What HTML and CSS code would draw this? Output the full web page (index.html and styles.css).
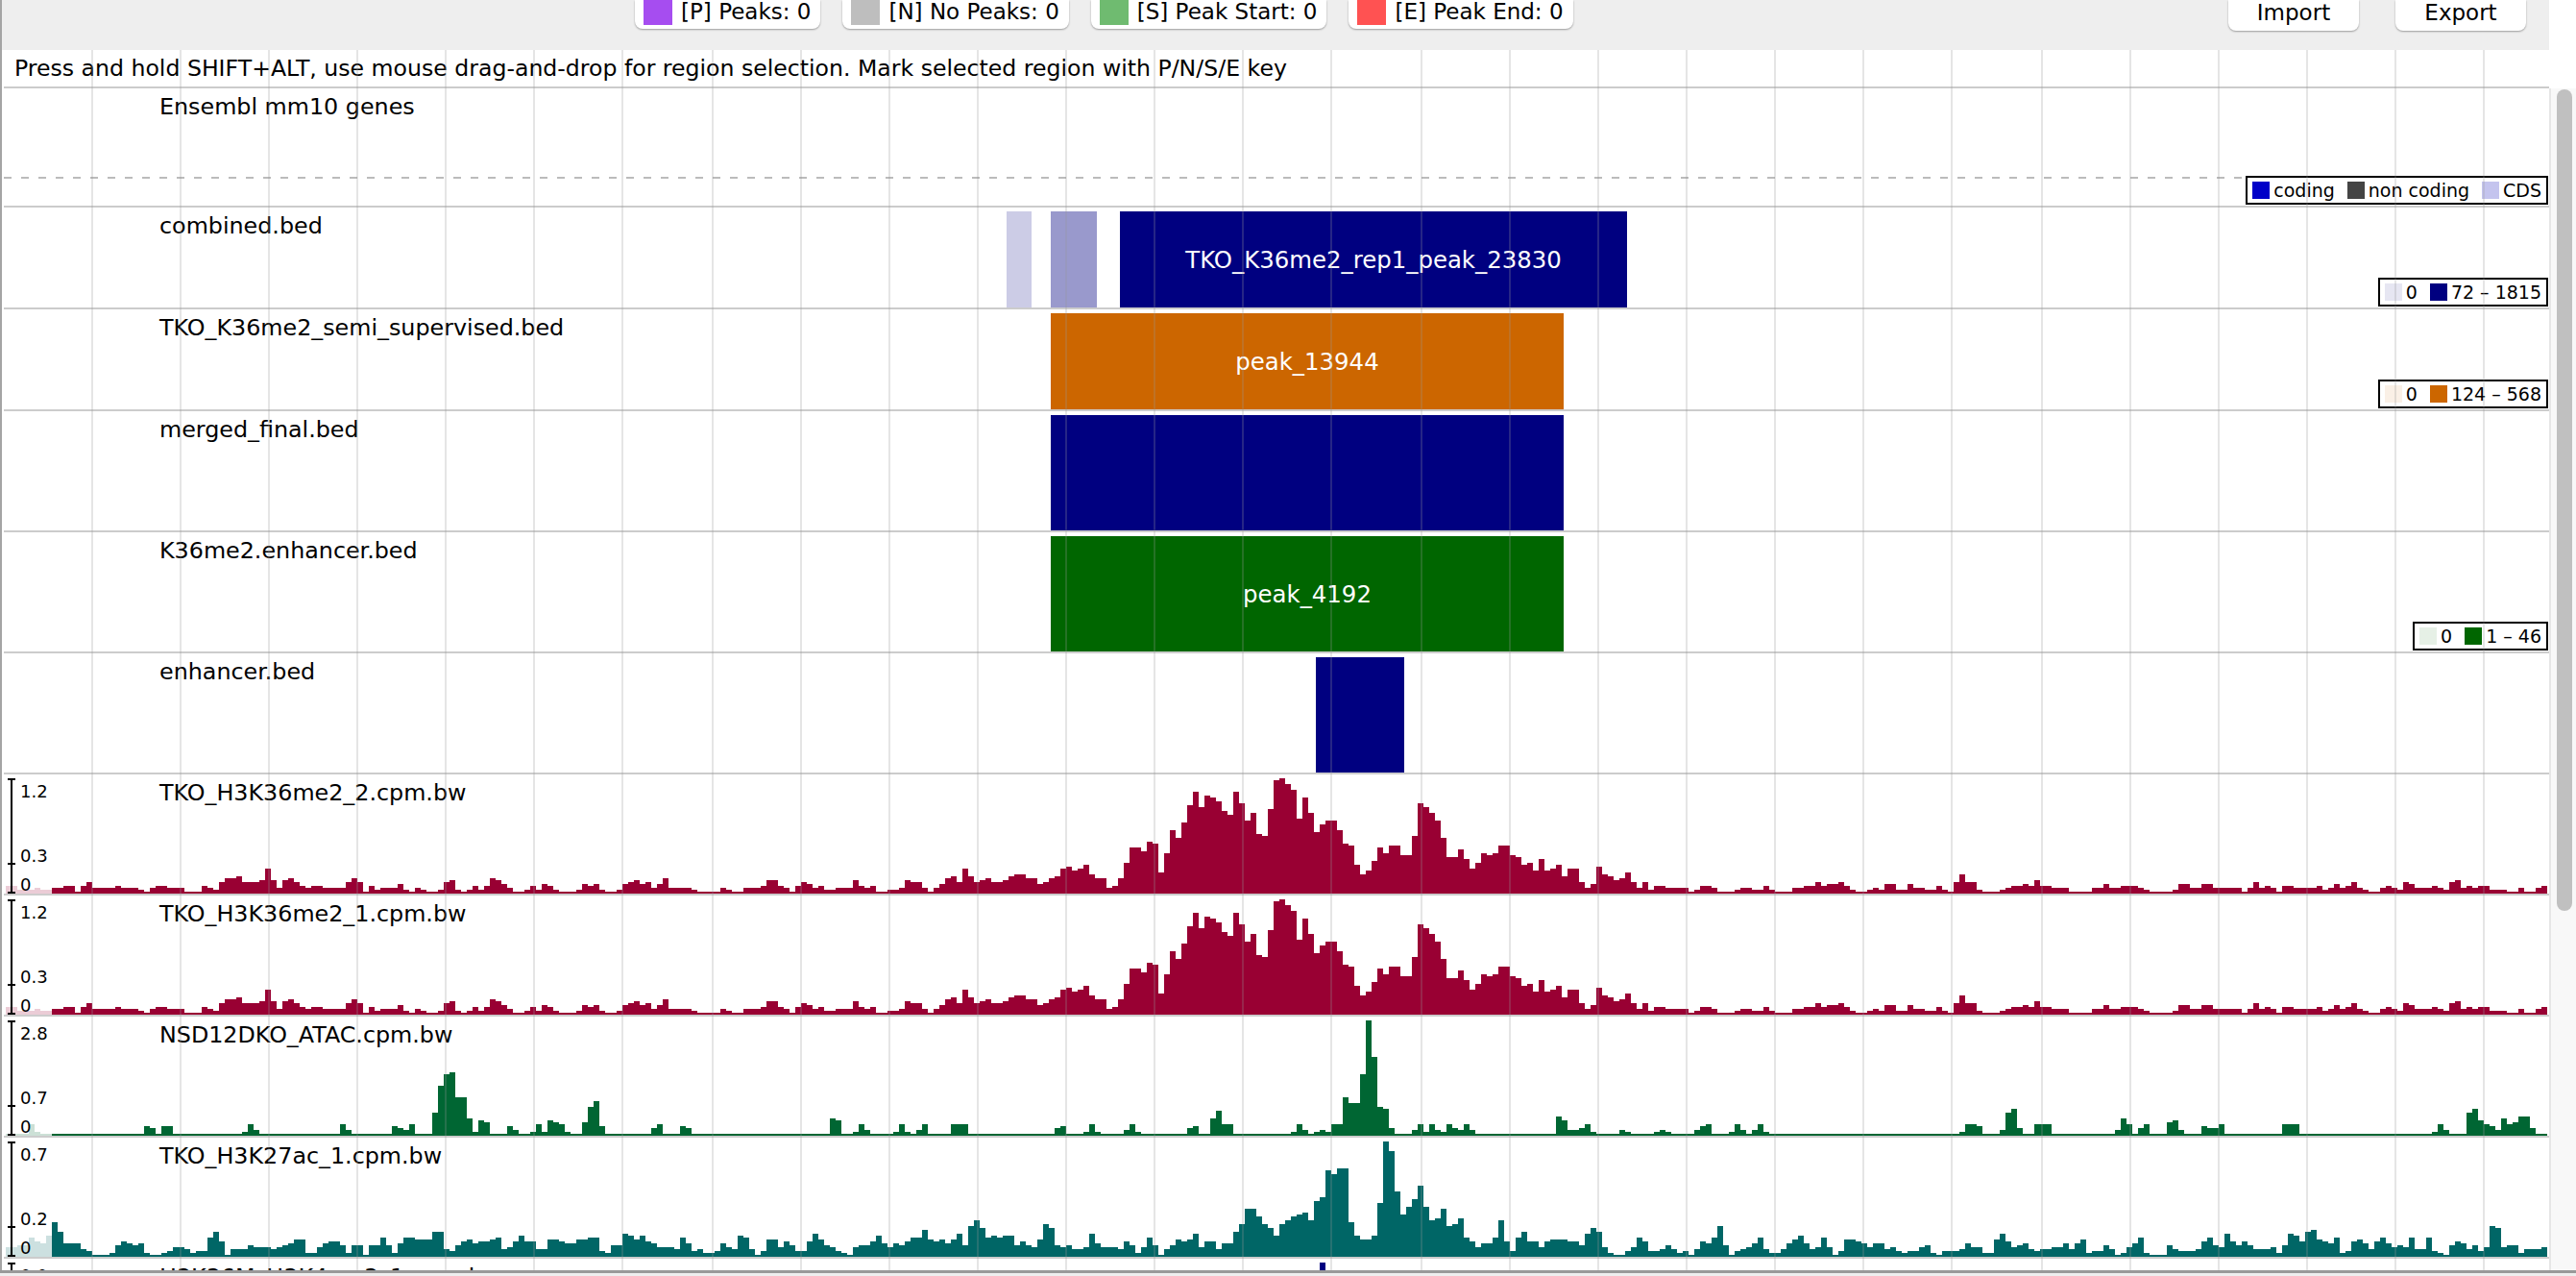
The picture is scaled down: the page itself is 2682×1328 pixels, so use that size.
FILE: index.html
```html
<!DOCTYPE html>
<html lang="en">
<head>
    <meta charset="UTF-8">
    <title>Peak Annotator</title>
    <link rel="stylesheet" href="styles.css">
</head>
<body>
    <div class="app">
        <div class="main">
            <!-- Marker counters and import/export -->
            <div class="toolbar">
                <div class="chip"><span class="swatch swatch-peak"></span>[P] Peaks: 0</div>
                <div class="chip"><span class="swatch swatch-nopeak"></span>[N] No Peaks: 0</div>
                <div class="chip"><span class="swatch swatch-start"></span>[S] Peak Start: 0</div>
                <div class="chip"><span class="swatch swatch-end"></span>[E] Peak End: 0</div>
                <button class="action action-import" type="button">Import</button>
                <button class="action" type="button">Export</button>
            </div>

            <div class="tracks">
                <div class="hint">Press and hold SHIFT+ALT, use mouse drag-and-drop for region selection. Mark selected region with P/N/S/E key</div>

                <div class="row row-gene">
                    <div class="track-name">Ensembl mm10 genes</div>
                    <div class="strand-line"></div>
                    <div class="legend">
                        <span class="key key-coding"></span><span class="key-text">coding</span>
                        <span class="key key-noncoding"></span><span class="key-text">non coding</span>
                        <span class="key key-cds"></span><span class="key-text">CDS</span>
                    </div>
                </div>

                <div class="row row-short">
                    <div class="track-name">combined.bed</div>
                    <div class="feature feature-navy-faint f-combined-a"></div>
                    <div class="feature feature-navy-soft f-combined-b"></div>
                    <div class="feature feature-navy f-combined-c">TKO_K36me2_rep1_peak_23830</div>
                    <div class="legend">
                        <span class="key key-navy-pale"></span><span class="key-text">0</span>
                        <span class="key key-navy"></span><span class="key-text">72 – 1815</span>
                    </div>
                </div>

                <div class="row row-short">
                    <div class="track-name">TKO_K36me2_semi_supervised.bed</div>
                    <div class="feature feature-orange f-peak">peak_13944</div>
                    <div class="legend">
                        <span class="key key-orange-pale"></span><span class="key-text">0</span>
                        <span class="key key-orange"></span><span class="key-text">124 – 568</span>
                    </div>
                </div>

                <div class="row">
                    <div class="track-name">merged_final.bed</div>
                    <div class="feature feature-navy f-peak"></div>
                </div>

                <div class="row">
                    <div class="track-name">K36me2.enhancer.bed</div>
                    <div class="feature feature-green f-peak">peak_4192</div>
                    <div class="legend">
                        <span class="key key-green-pale"></span><span class="key-text">0</span>
                        <span class="key key-green"></span><span class="key-text">1 – 46</span>
                    </div>
                </div>

                <div class="row">
                    <div class="track-name">enhancer.bed</div>
                    <div class="feature feature-navy f-enhancer"></div>
                </div>

                <div class="row">
                    <svg class="signal signal-crimson" data-track="k36me2"></svg>
                    <div class="track-name">TKO_H3K36me2_2.cpm.bw</div>
                    <div class="scale">
                        <svg class="axis"><path d="M4 5H12M8 5V123M4 93H12M4 123H12"/></svg>
                        <span class="scale-max">1.2</span><span class="scale-mid">0.3</span><span class="scale-min">0</span>
                    </div>
                </div>

                <div class="row">
                    <svg class="signal signal-crimson" data-track="k36me2"></svg>
                    <div class="track-name">TKO_H3K36me2_1.cpm.bw</div>
                    <div class="scale">
                        <svg class="axis"><path d="M4 5H12M8 5V123M4 93H12M4 123H12"/></svg>
                        <span class="scale-max">1.2</span><span class="scale-mid">0.3</span><span class="scale-min">0</span>
                    </div>
                </div>

                <div class="row">
                    <svg class="signal signal-green" data-track="atac"></svg>
                    <div class="track-name">NSD12DKO_ATAC.cpm.bw</div>
                    <div class="scale">
                        <svg class="axis"><path d="M4 5H12M8 5V123M4 93H12M4 123H12"/></svg>
                        <span class="scale-max">2.8</span><span class="scale-mid">0.7</span><span class="scale-min">0</span>
                    </div>
                </div>

                <div class="row">
                    <svg class="signal signal-teal" data-track="k27ac"></svg>
                    <div class="track-name">TKO_H3K27ac_1.cpm.bw</div>
                    <div class="scale">
                        <svg class="axis"><path d="M4 5H12M8 5V123M4 93H12M4 123H12"/></svg>
                        <span class="scale-max">0.7</span><span class="scale-mid">0.2</span><span class="scale-min">0</span>
                    </div>
                </div>

                <div class="row row-cut">
                    <div class="track-name">H3K36M_H3K4me3_1.cpm.bw</div>
                    <div class="feature feature-navy f-tick"></div>
                    <div class="scale">
                        <svg class="axis"><path d="M4 5H12M8 5V123"/></svg>
                        <span class="scale-max">0.0</span>
                    </div>
                </div>
            </div>

            <!-- Vertical ruler lines, drawn over everything in the tracks -->
            <svg class="ruler"><path d="M96 0V1270M188 0V1270M280 0V1270M372 0V1270M464 0V1270M556 0V1270M648 0V1270M742 0V1270M834 0V1270M926 0V1270M1018 0V1270M1110 0V1270M1202 0V1270M1294 0V1270M1386 0V1270M1480 0V1270M1572 0V1270M1664 0V1270M1756 0V1270M1848 0V1270M1940 0V1270M2032 0V1270M2126 0V1270M2218 0V1270M2310 0V1270M2402 0V1270M2494 0V1270M2586 0V1270"/></svg>
        </div>

        <div class="scrollbar"><div class="thumb"></div></div>
    </div>
    <div class="statusbar"></div>

    <script src="tracks.js"></script>
</body>
</html>
```

FILE: styles.css
```css
html, body {
    margin: 0;
    height: 100%;
    overflow: hidden;
    background-color: #fff;
}
body {
    font-family: "DejaVu Sans", sans-serif;
    font-size: 20px;
    color: #000;
}
.app {
    display: flex;
    height: 1322px;
}
.main {
    position: relative;
    width: 2652px;
    border-left: 2px solid #a4a4a4;
}

/* toolbar */
.toolbar {
    display: flex;
    align-items: flex-start;
    height: 52px;
    padding-left: 659px;
    padding-right: 24px;
    gap: 23px;
    font-size: 23px;
    background-color: #eee;
    box-sizing: border-box;
}
.chip {
    display: flex;
    height: 30px;
    padding: 0 10px 0 9px;
    gap: 9px;
    line-height: 24px;
    background-color: #fff;
    border-radius: 0 0 8px 8px;
    box-shadow: 0 1px 2px rgba(0, 0, 0, 0.35);
    white-space: nowrap;
}
.swatch {
    width: 30px;
    height: 26px;
}
.swatch-peak { background-color: #a64df0; }
.swatch-nopeak { background-color: #bebebe; }
.swatch-start { background-color: #6fbb70; }
.swatch-end { background-color: #ff5252; }
.action {
    width: 136px;
    height: 32px;
    padding: 0 0 6px;
    font: inherit;
    color: #000;
    background-color: #fff;
    border: none;
    border-radius: 0 0 8px 8px;
    box-shadow: 0 1px 2px rgba(0, 0, 0, 0.35);
}
.action-import {
    margin-left: auto;
    margin-right: 15px;
}

/* tracks */
.tracks {
    margin-left: 2px;
    background-color: #fff;
}
.hint {
    height: 38px;
    padding-left: 11px;
    font-size: 23.6px;
    line-height: 38px;
    border-bottom: 2px solid #ccc;
    white-space: nowrap;
}
.row {
    position: relative;
    height: 124px;
    border-bottom: 2px solid #ccc;
    overflow: hidden;
}
.row-gene { height: 122px; }
.row-short { height: 104px; }
.row-cut {
    height: 12px;
    border-bottom: none;
}
.track-name {
    position: relative;
    padding: 6px 0 0 162px;
    font-size: 23.8px;
    line-height: 26px;
}
.strand-line {
    position: absolute;
    top: 92px;
    left: 0;
    right: 10px;
    height: 2px;
    background: repeating-linear-gradient(90deg, #bbb 0 8px, transparent 8px 18px);
}

/* bed features */
.feature {
    position: absolute;
    top: 4px;
    bottom: 0;
    display: flex;
    align-items: center;
    justify-content: center;
    font-size: 24.4px;
    color: #fff;
    white-space: nowrap;
}
.feature-navy { background-color: #000080; }
.feature-navy-soft { background-color: #9999cc; }
.feature-navy-faint { background-color: #ccccE6; }
.feature-orange { background-color: #cc6600; }
.feature-green { background-color: #006600; }
.f-combined-a { left: 1044px; width: 26px; }
.f-combined-b { left: 1090px; width: 48px; }
.f-combined-c { left: 1162px; width: 528px; }
.f-peak { left: 1090px; width: 534px; }
.f-enhancer { left: 1366px; width: 92px; }
.f-tick { left: 1370px; width: 6px; }

/* legends */
.legend {
    position: absolute;
    right: 1px;
    bottom: 1px;
    display: flex;
    align-items: center;
    height: 26px;
    padding: 0 5px;
    font-size: 19px;
    background-color: #fff;
    border: 2px solid #000;
}
.key {
    width: 18px;
    height: 18px;
    margin-right: 4px;
}
.key-text {
    margin-right: 13px;
    white-space: nowrap;
}
.key-text:last-child { margin-right: 0; }
.key-coding { background-color: #0000c8; }
.key-noncoding { background-color: #444; }
.key-cds { background-color: #c4c4ee; }
.key-navy { background-color: #000080; }
.key-navy-pale { background-color: #e6e6f2; }
.key-orange { background-color: #cc6600; }
.key-orange-pale { background-color: #faf0e6; }
.key-green { background-color: #006600; }
.key-green-pale { background-color: #e6f0e6; }

/* bigwig tracks */
.signal {
    position: absolute;
    top: 0;
    left: 0;
    width: 2650px;
    height: 124px;
    shape-rendering: crispEdges;
}
.signal-crimson { fill: #990033; }
.signal-green { fill: #006633; }
.signal-teal { fill: #006666; }
.scale {
    position: absolute;
    top: 0;
    left: 0;
    width: 50px;
    height: 124px;
    font-size: 18px;
    background-color: rgba(255, 255, 255, 0.8);
}
.axis {
    position: absolute;
    top: 0;
    left: 0;
    width: 20px;
    height: 124px;
    fill: none;
    stroke: #000;
    stroke-width: 2;
    shape-rendering: crispEdges;
}
.scale-max, .scale-mid, .scale-min {
    position: absolute;
    left: 17px;
    line-height: 20px;
}
.scale-max { top: 8px; }
.scale-mid { top: 75px; }
.scale-min { top: 105px; }

/* ruler */
.ruler {
    position: absolute;
    top: 52px;
    left: -2px;
    width: 2654px;
    height: 1270px;
    fill: none;
    stroke: rgba(150, 150, 150, 0.25);
    stroke-width: 2;
    shape-rendering: crispEdges;
    pointer-events: none;
}

/* scrollbar */
.scrollbar {
    flex: 1;
    margin-top: 92px;
    padding-left: 6px;
    background-color: #f8f8f8;
    border-left: 2px solid #e6e6e6;
}
.thumb {
    width: 16px;
    height: 855px;
    margin-top: 1px;
    background-color: #c0c0c0;
    border-radius: 8px;
}
.statusbar {
    height: 6px;
    background-color: #eee;
    border-top: 3px solid #999;
    box-sizing: border-box;
}
```

FILE: tracks.js
```js
// Bin heights for the bigwig tracks. One bin is 6px wide, heights are in units of 2px.
const BIN_WIDTH = 6;
const UNIT = 2;
const TRACK_HEIGHT = 124;

const k36me2 = [
    4,4,2,2,2,3,2,2,
    3,3,4,4,1,4,6,3,3,3,3,4,3,3,3,2,1,3,4,4,3,3,3,1,1,1,4,3,2,6,8,8,9,6,6,6,7,13,7,3,7,8,6,4,3,4,4,3,3,3,3,6,8,6,1,4,2,3,3,3,5,2,1,3,2,1,1,2,6,7,2,1,2,4,2,4,8,7,5,3,1,1,2,4,2,5,4,2,1,1,1,2,5,4,5,2,1,1,
    2,5,6,7,5,6,3,5,8,3,3,3,3,2,1,1,1,1,3,2,1,1,3,3,3,4,7,7,4,3,1,4,6,5,3,4,2,2,3,3,3,7,4,3,4,1,1,2,2,3,7,6,6,3,1,3,5,8,9,6,13,9,6,7,8,6,6,7,9,10,10,8,8,5,6,8,9,13,14,12,13,15,10,
    8,8,3,4,8,16,24,24,22,27,26,11,21,33,29,37,46,53,45,51,50,48,43,41,53,47,38,42,31,30,44,59,60,57,54,39,50,42,32,36,38,38,33,26,25,15,10,12,17,24,21,25,25,20,20,30,47,45,42,38,29,19,19,23,18,13,16,21,20,21,25,25,20,19,15,16,12,18,12,13,15,9,13,13,6,3,5,14,10,9,7,8,11,6,
    3,6,2,4,4,3,3,3,3,1,2,4,4,3,1,1,1,2,3,3,2,2,4,2,1,1,1,3,3,4,4,6,4,5,5,6,4,2,1,1,2,3,2,5,5,2,2,5,3,3,2,2,4,2,1,6,10,6,6,2,1,1,1,2,3,4,
    4,5,4,7,4,4,3,3,3,1,1,1,1,3,3,5,3,3,4,4,4,3,2,1,1,1,1,2,5,5,3,3,5,5,3,3,3,3,3,1,3,6,3,4,3,1,4,4,3,3,3,3,4,2,3,5,3,4,6,3,2,1,1,3,4,3,2,6,5,3,3,3,4,3,2,6,7,3,4,3,4,4,2,2,2,1,1,3,1,1,3,4
];

const k27ac = [
    5,5,6,6,10,8,7,11,
    18,13,7,7,7,4,3,1,1,1,2,6,8,7,6,7,2,1,1,2,3,5,5,4,2,3,3,10,13,8,1,4,4,4,6,5,5,5,4,5,6,7,9,9,2,2,5,7,8,8,6,2,6,6,1,6,6,10,6,2,7,10,10,9,9,9,13,13,4,3,6,8,9,7,8,8,9,10,4,5,8,11,8,8,4,4,9,9,8,7,7,9,9,10,10,3,2,6,6,
    12,11,9,11,8,7,5,5,5,4,10,7,3,4,2,2,3,7,5,4,11,10,4,1,3,9,9,5,8,6,3,3,8,12,9,6,5,3,2,1,5,6,6,8,11,7,5,7,6,8,10,10,14,9,8,9,7,9,12,6,16,19,15,10,11,10,11,11,6,8,6,5,9,17,15,6,5,6,4,4,5,12,
    7,5,5,5,4,8,6,2,5,10,6,1,4,6,9,8,9,12,5,8,8,4,7,7,13,17,25,25,21,17,15,11,17,19,21,22,23,19,29,31,45,43,46,46,18,11,9,9,11,28,60,55,34,22,26,30,37,26,19,20,25,16,17,20,10,8,5,7,7,10,19,8,3,10,13,8,8,5,8,9,9,9,8,8,6,12,15,13,5,2,1,1,3,5,
    10,8,3,3,4,6,4,2,3,1,4,8,7,10,16,6,1,3,4,5,7,10,4,2,2,4,7,9,11,7,4,5,10,5,1,3,9,9,8,7,5,7,7,4,5,3,2,3,3,5,6,2,1,3,3,3,4,7,5,5,2,2,9,12,8,5,
    6,7,4,3,4,4,5,5,7,4,7,9,2,3,3,6,4,1,2,5,7,10,2,1,1,1,6,4,3,3,3,4,8,10,6,5,12,8,6,8,6,4,4,4,5,2,6,12,11,8,13,14,9,8,7,10,2,3,8,9,7,4,8,10,7,5,6,5,10,4,4,10,3,2,1,6,8,7,4,6,3,5,16,15,5,6,6,2,4,4,4,5
];

// ATAC is flat apart from the peaks, so only the peaks are listed: [first bin, heights...]
const atacPeaks = [
    [4,6,2],[24,5,4],[27,5,5],[41,2,6,3],[58,6,3],[67,5,4,3,6],[74,12,26,32,33,20,20,9,2,8,7],[87,5,3],
    [91,2,6,2,8,7,6,2],[100,7,15,18,5],[112,4,6],[117,5,4],[143,9,8],[147,2,6,3],[154,2,6,2,1,3,6],[164,6,6,6],
    [182,4,5],[187,2,6,2],[194,3,6,2],[205,4,5],[209,9,13,6,6],[223,2,6,3],[227,2,3,2],
    [230,6,6,20,17,17,32,60,41,15,14,4],[244,3,6,2,6,3,2,6,4,3,6,3],[269,10,8,3,3,4,6,2],[280,3,2],[286,2,3,2],
    [293,3,5,6],[299,2,6,3,1,3,6,2],[339,2,6,6,5],[346,3,12,14,4],[352,6,6,6],[366,3,9,6],[370,4,6],[375,7,8,3],
    [381,5,4,4,6],[395,6,6,6],[421,2,6,3],[427,12,14,8,6,5,3,9,6,7,10,10,4]
];

function expandPeaks(peaks, length) {
    const bins = new Array(length).fill(1);
    peaks.forEach(peak => {
        peak.slice(1).forEach((height, i) => {
            bins[peak[0] + i] = height;
        });
    });
    return bins;
}

const trackData = {
    k36me2: k36me2,
    k27ac: k27ac,
    atac: expandPeaks(atacPeaks, k36me2.length)
};

function binsToPath(bins) {
    let d = '';
    bins.forEach((value, i) => {
        const x = 2 + i * BIN_WIDTH;
        const top = TRACK_HEIGHT - value * UNIT;
        d += `M${x} ${TRACK_HEIGHT}V${top}H${x + BIN_WIDTH}V${TRACK_HEIGHT}Z`;
    });
    return d;
}

document.querySelectorAll('.signal').forEach(svg => {
    const path = document.createElementNS('http://www.w3.org/2000/svg', 'path');
    path.setAttribute('d', binsToPath(trackData[svg.dataset.track]));
    svg.appendChild(path);
});
```
